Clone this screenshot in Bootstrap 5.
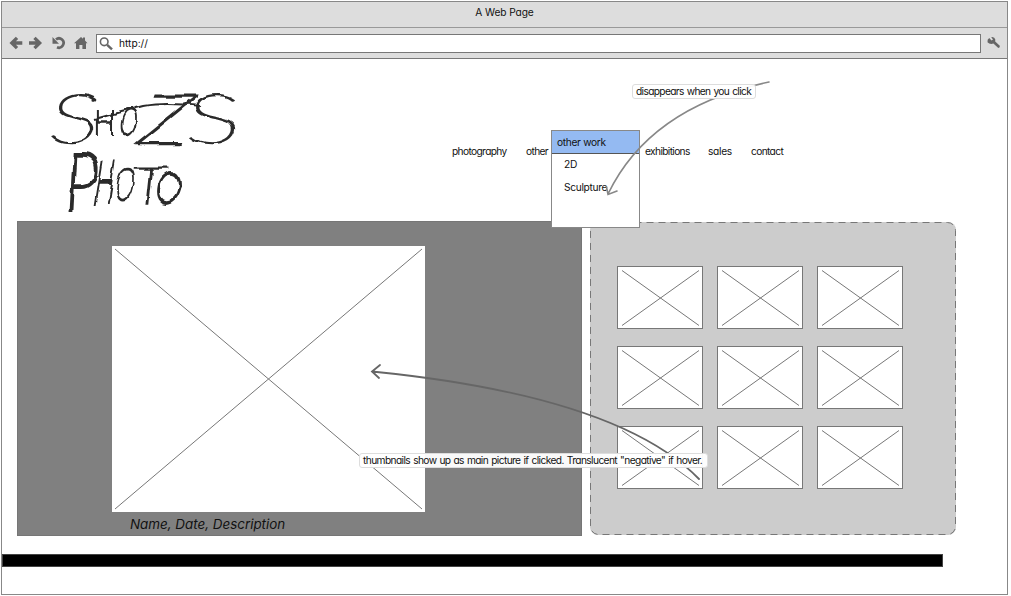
<!DOCTYPE html>
<html lang="en">
<head>
<meta charset="utf-8">
<title>A Web Page</title>
<link href="https://cdn.jsdelivr.net/npm/bootstrap@5.3.0/dist/css/bootstrap.min.css" rel="stylesheet">
<style>
body{background:#fff;color:#111;font-family:Inter,"Liberation Sans",sans-serif;font-feature-settings:"cv11";font-size:10.2px;line-height:14px;overflow:hidden}
.browser{width:1007px;height:594px;margin:1px 0 0 1px;border:1px solid #888}
.titlebar{height:26px;background:#ddd;border-bottom:1px solid #999;padding-top:3px;letter-spacing:-.1px}
.toolbar{height:31px;background:#ddd;border-bottom:1px solid #777;padding-left:7px}
.address{width:885px;height:19px;border:1px solid #777;background:#fff;margin-left:7px}
.masthead{height:162px}
.wordmark{width:200px;height:140px;margin-left:38px;margin-top:21px;overflow:visible;font-family:Lato,sans-serif;font-size:100px;fill:#2b2b2b;stroke:#2b2b2b}
.wordmark text{text-anchor:middle;vector-effect:non-scaling-stroke}
.sitenav{display:grid;grid-template-columns:74px 119px 63px 43px 50px;margin-left:212px;margin-top:85px;height:14px;white-space:nowrap;letter-spacing:-.64px}
.stage{width:565px;height:315px;background:#808080;border:1px solid #767676;margin-left:15px;padding:24px 0 0 94px}
.photo{width:313px;height:266px;background:#fff}
.caption-line{font-size:13.4px;line-height:20px;font-style:italic;padding:2px 0 0 18px}
.gallery{width:366px;height:313px;border-radius:8px;background:#ccc;margin:1px 0 0 8px;padding:44px 0 0 27px}
.thumbs{display:grid;grid-template-columns:repeat(3,87px);grid-template-rows:repeat(3,63px);column-gap:13px;row-gap:17px}
.thumb{background:#fff;border:1px solid #777}
.footbar{width:941px;height:13px;background:#000;border:1px solid #444;margin-top:18px}
.flyout{left:551px;top:130px;width:89px;height:98px;background:#fff;border:1px solid #888;letter-spacing:-.32px}
.flyout-head{height:23px;background:#94baf2;border-bottom:1px solid #555;padding:4px 0 0 5px}
.flyout-item{padding:3px 0 6px 12px}
.note{background:rgba(255,255,255,.95);border:1px solid #ddd;border-radius:3px;height:15px;line-height:12px;white-space:nowrap;padding-left:3px}
.note-a{left:632px;top:84px;width:124px;letter-spacing:-.65px;word-spacing:.8px}
.note-b{left:359px;top:453px;width:349px;letter-spacing:-.6px;word-spacing:.75px}
</style>
</head>
<body>
<div class="browser">
  <div class="titlebar text-center">A Web Page</div>
  <div class="toolbar d-flex align-items-center">
    <svg width="80" height="18" viewBox="0 0 80 18" fill="none" stroke="#666" stroke-width="3.3">
      <path d="M13.300 9H3M8 3.800L2.800 9l5.200 5.200"/><path d="M20 9H30.500M25.500 3.800L30.700 9 25.500 14.200"/>
      <path d="M47 5.500A4.600 4.600 0 1 1 48 13.200" stroke-width="2.700"/><path d="M43.500 3v6.800h6.500z" fill="#666" stroke="none"/>
      <path d="M65 9.300L72 3l2 1.800V3.400h2v3.200l2.500 2.700H77V15h-3.600v-4h-3v4H67V9.300z" fill="#666" stroke="none"/>
    </svg>
    <div class="address d-flex align-items-center">
      <svg width="18" height="17" viewBox="0 0 18 17" fill="none" stroke="#666"><circle cx="7.2" cy="6.8" r="3.8" stroke-width="1.6"/><path d="M10.2 9.8L15 14.3" stroke-width="2.4"/></svg>
      <span class="ms-1">http://</span>
    </div>
    <svg class="ms-1" width="18" height="16" viewBox="0 0 18 16"><path d="M2.500 7.200Q2 4.600 4.200 3L6.500 5.400 8 4.500 6.200 2.200Q9.600 1.600 10.300 4.600L10.200 6.400 14.800 10.700Q15.300 12.600 13.300 12.900L8.400 8.600Q4.600 9.600 2.500 7.200Z" fill="#666"/></svg>
  </div>
  <header class="masthead d-flex">
    <svg class="wordmark flex-shrink-0" viewBox="40 80 200 140">
      <defs><filter id="ink" filterUnits="userSpaceOnUse" x="40" y="80" width="210" height="145"><feTurbulence type="fractalNoise" baseFrequency=".05" numOctaves="2" seed="4"/><feDisplacementMap in="SourceGraphic" scale="6" xChannelSelector="R" yChannelSelector="G"/></filter></defs>
      <g font-weight="100" stroke-width="1.900" filter="url(#ink)">
      <text transform="translate(72 143) skewX(-8) scale(.96 .68)">S</text>
      <text transform="translate(105 135) scale(.28 .36)">H</text>
      <text transform="translate(127 134) skewX(-8) scale(.22 .34)">O</text>
      <text transform="translate(158 144) skewX(-20) scale(.84 .69)" stroke-width="2.800">Z</text>
      <text transform="translate(212 143) skewX(-4) scale(1.050 .68)">S</text>
      <text transform="translate(81 211) skewX(-3) scale(.60 .80)" stroke-width="3.600">P</text>
      <text transform="translate(102 203) skewX(-9) scale(.24 .58)" stroke-width="3">H</text>
      <text transform="translate(123 200) skewX(-8) scale(.24 .44)">O</text>
      <text transform="translate(147 204) skewX(-6) scale(.62 .51)">T</text>
      <text transform="translate(167 202) skewX(-8) scale(.32 .40)" stroke-width="3">O</text>
      <path d="M95 119Q120 112 143 106Q165 102 200 106" fill="none" stroke-width="2.200"/>
      </g>
    </svg>
    <nav class="sitenav"><span>photography</span><span>other</span><span>exhibitions</span><span style="letter-spacing:-.3px">sales</span><span>contact</span></nav>
  </header>
  <main class="d-flex align-items-start">
    <section class="stage">
      <svg class="photo d-block" viewBox="0 0 313 266" stroke="#777"><path d="M3 3L310 263M310 3L3 263"/></svg>
      <div class="caption-line">Name, Date, Description</div>
    </section>
    <section class="gallery position-relative">
      <svg class="position-absolute top-0 start-0" width="366" height="313" fill="none" stroke="#777"><rect x=".5" y=".5" width="365" height="312" rx="8" stroke-dasharray="7 5"/></svg>
      <div class="thumbs" id="thumbs"></div>
    </section>
  </main>
  <div class="footbar"></div>
</div>

<div class="flyout position-absolute">
  <div class="flyout-head">other work</div>
  <div class="flyout-item">2D</div>
  <div class="flyout-item">Sculpture</div>
</div>
<svg class="position-absolute top-0 start-0" width="1011" height="596" fill="none" stroke-linecap="round">
  <path d="M769 82Q650 107 608 194M606.500 187L608 194.500 617 191" stroke="#888" stroke-width="1.600"/>
  <path d="M699 479Q618 396 372 371.500M380 365L372 371.500 379 378" stroke="#666" stroke-width="1.800"/>
</svg>
<div class="note note-a position-absolute">disappears when you click</div>
<div class="note note-b position-absolute">thumbnails show up as main picture if clicked. Translucent "negative" if hover.</div>

<script src="https://cdn.jsdelivr.net/npm/bootstrap@5.3.0/dist/js/bootstrap.bundle.min.js"></script>
<script>
document.getElementById('thumbs').innerHTML = Array(9).fill('<svg class="thumb" width="86" height="63" viewBox="0 0 84 61" stroke="#777"><path d="M4 3.500L81 58.500M81 3.500L4 58.500"/></svg>').join('');
</script>
</body>
</html>
